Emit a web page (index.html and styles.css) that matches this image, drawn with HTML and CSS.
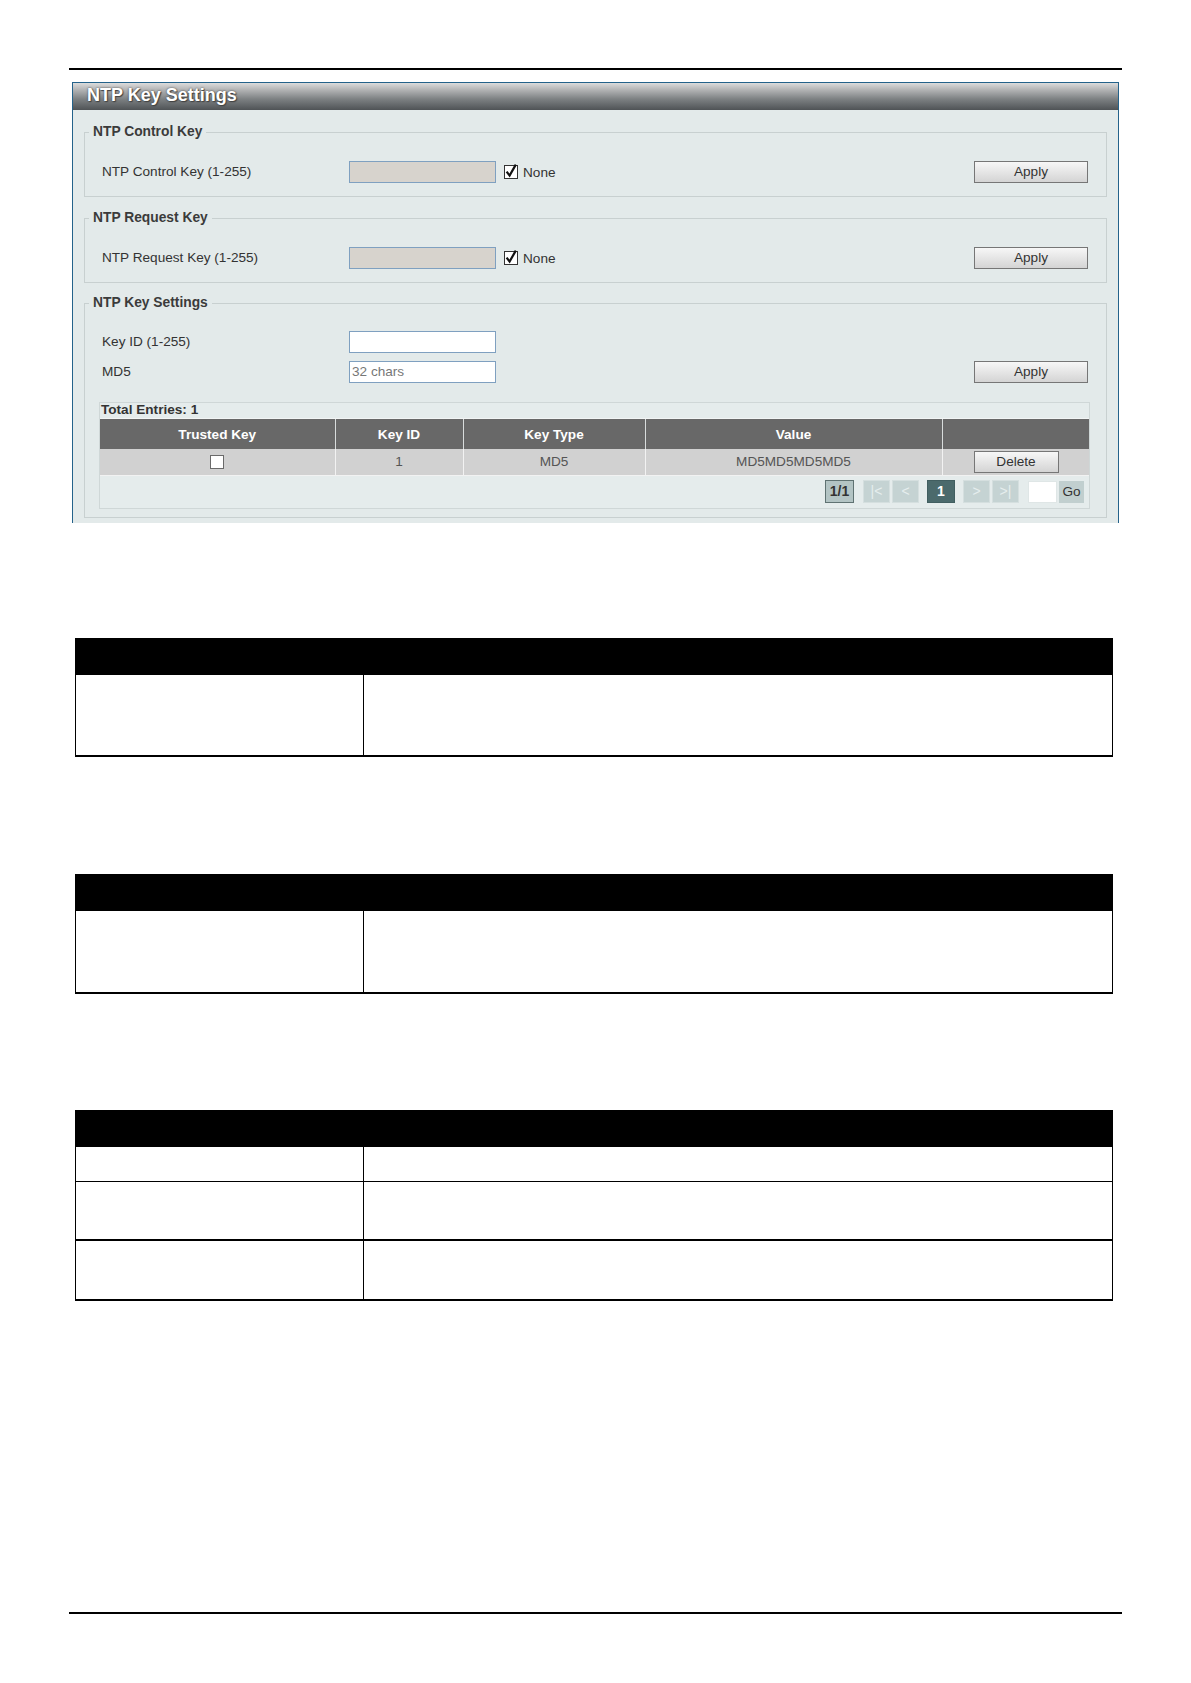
FILE: index.html
```html
<!DOCTYPE html>
<html lang="en">
<head>
<meta charset="utf-8">
<title>NTP Key Settings</title>
<link rel="stylesheet" href="styles.css">
</head>
<body>
<div class="page">
  <div class="rule"></div>

  <div class="panel">
    <div class="panel-title">NTP Key Settings</div>
    <div class="panel-body">

      <fieldset class="fs">
        <legend>NTP Control Key</legend>
        <div class="fs-body">
          <div class="row">
            <span class="lbl">NTP Control Key (1-255)</span>
            <span class="field disabled"></span>
            <span class="chk"><svg width="14" height="16" viewBox="0 0 14 16"><rect x="0.5" y="2.5" width="13" height="13" fill="#fff" stroke="#333"/><path d="M2.6 8.6 L5.6 12.6 L11.8 1.6" fill="none" stroke="#111" stroke-width="2.2"/></svg></span>
            <span class="chk-lbl">None</span>
            <span class="btn apply">Apply</span>
          </div>
        </div>
      </fieldset>

      <fieldset class="fs">
        <legend>NTP Request Key</legend>
        <div class="fs-body">
          <div class="row">
            <span class="lbl">NTP Request Key (1-255)</span>
            <span class="field disabled"></span>
            <span class="chk"><svg width="14" height="16" viewBox="0 0 14 16"><rect x="0.5" y="2.5" width="13" height="13" fill="#fff" stroke="#333"/><path d="M2.6 8.6 L5.6 12.6 L11.8 1.6" fill="none" stroke="#111" stroke-width="2.2"/></svg></span>
            <span class="chk-lbl">None</span>
            <span class="btn apply">Apply</span>
          </div>
        </div>
      </fieldset>

      <fieldset class="fs fs-last">
        <legend>NTP Key Settings</legend>
        <div class="fs-body last">
          <div class="row">
            <span class="lbl">Key ID (1-255)</span>
            <span class="field"></span>
          </div>
          <div class="row">
            <span class="lbl">MD5</span>
            <span class="field placeholder">32 chars</span>
            <span class="btn apply">Apply</span>
          </div>

          <div class="entries">
            <div class="entries-cap">Total Entries: 1</div>
            <table class="grid">
              <colgroup>
                <col class="c1"><col class="c2"><col class="c3"><col class="c4"><col class="c5">
              </colgroup>
              <thead>
                <tr><th>Trusted Key</th><th>Key ID</th><th>Key Type</th><th>Value</th><th></th></tr>
              </thead>
              <tbody>
                <tr>
                  <td><span class="box"></span></td>
                  <td>1</td>
                  <td>MD5</td>
                  <td>MD5MD5MD5MD5</td>
                  <td><span class="btn del">Delete</span></td>
                </tr>
              </tbody>
            </table>
            <div class="pager">
              <span class="pg info">1/1</span>
              <span class="pg dis first">|&lt;</span>
              <span class="pg dis">&lt;</span>
              <span class="pg cur">1</span>
              <span class="pg dis">&gt;</span>
              <span class="pg dis">&gt;|</span>
              <span class="pg-input"></span>
              <span class="pg go">Go</span>
            </div>
          </div>
        </div>
      </fieldset>

    </div>
  </div>

  <table class="desc t1">
    <colgroup><col class="ck"><col class="cv"></colgroup>
    <tr class="head"><th colspan="2"></th></tr>
    <tr class="r-tall"><td></td><td></td></tr>
  </table>

  <table class="desc t2">
    <colgroup><col class="ck"><col class="cv"></colgroup>
    <tr class="head"><th colspan="2"></th></tr>
    <tr class="r-tall"><td></td><td></td></tr>
  </table>

  <table class="desc t3">
    <colgroup><col class="ck"><col class="cv"></colgroup>
    <tr class="head"><th colspan="2"></th></tr>
    <tr class="r-short"><td></td><td></td></tr>
    <tr class="r-mid"><td></td><td></td></tr>
    <tr class="r-mid last"><td></td><td></td></tr>
  </table>

  <div class="rule footer"></div>
</div>
</body>
</html>
```

FILE: styles.css
```css
* { box-sizing: border-box; }

html, body {
  margin: 0;
  background: #fff;
}

body {
  font-family: "Liberation Sans", Arial, sans-serif;
  font-size: 13.6px;
  color: #333;
}

.page {
  margin-left: 69px;
  width: 1053px;
  padding-top: 68px;
}

.rule {
  height: 2px;
  background: #000;
}

/* ---------- Panel ---------- */
.panel {
  margin: 12px 0 0 3px;
  width: 1047px;
  border: 1px solid #24628a;
  border-bottom: 0;
  background: #e3eaea;
}

.panel-title {
  height: 27px;
  line-height: 25px;
  padding-left: 14px;
  color: #fff;
  font-weight: bold;
  font-size: 18px;
  background: linear-gradient(#dcdcdc 0%, #b3b4b5 25%, #7c8082 60%, #4f5356 100%);
  text-shadow: 0 0 2px #3a3a3a, 1px 1px 1px #444;
}

.panel-body {
  padding: 0 11px 5px;
}

.fs {
  margin: 14px 0 0;
  padding: 0 4px;
  border: 1px solid #c8d0d0;
  min-width: 0;
}

.fs + .fs {
  margin-top: 13px;
}

.fs + .fs.fs-last {
  margin-top: 12px;
}

.fs legend {
  padding: 0 4px;
  font-weight: bold;
  font-size: 13.8px;
  line-height: 16px;
  color: #3b3b3b;
}

.fs-body {
  padding: 21px 12px 13px 10px;
}

.fs-body.last {
  padding-top: 20px;
  padding-bottom: 8px;
}

.row {
  display: flex;
  align-items: center;
  height: 22px;
}

.row + .row {
  margin-top: 8px;
}

.lbl {
  width: 250px;
  padding-left: 3px;
  padding-bottom: 1px;
  color: #333;
}

.field {
  width: 147px;
  height: 22px;
  border: 1px solid #7fa0c0;
  background: #fff;
  line-height: 20px;
  padding-left: 2px;
}

.field.disabled {
  background: #d7d3cd;
}

.field.placeholder {
  color: #777;
}

.chk {
  display: inline-flex;
  margin-left: 8px;
  margin-top: -3px;
}

.chk-lbl {
  margin-left: 5px;
  color: #333;
}

.btn {
  display: inline-block;
  height: 22px;
  line-height: 20px;
  text-align: center;
  border: 1px solid #767676;
  background: linear-gradient(#f7f7f7, #e2e2e2 60%, #d4d4d4);
  color: #333;
  font-size: 13.6px;
}

.btn.apply {
  width: 114px;
  margin-left: auto;
  margin-right: 2px;
}

.btn.del {
  width: 85px;
}

/* ---------- Entries table ---------- */
.entries {
  margin-top: 19px;
  border: 1px solid #cfd7d7;
  background: #e5ecec;
}

.entries-cap {
  height: 16px;
  line-height: 14px;
  padding-left: 1px;
  font-weight: bold;
  color: #333;
  border-bottom: 1px solid #f2f5f5;
}

.grid {
  width: 100%;
  border-collapse: collapse;
  table-layout: fixed;
}

.grid .c1 { width: 235px; }
.grid .c2 { width: 128px; }
.grid .c3 { width: 182px; }
.grid .c4 { width: 297px; }
.grid .c5 { width: auto; }

.grid th {
  height: 30px;
  background: #686868;
  color: #fff;
  font-weight: bold;
  font-size: 13.6px;
  border-left: 1px solid #d8dcdc;
  padding: 0;
}

.grid th:first-child,
.grid td:first-child {
  border-left: 0;
}

.grid td {
  height: 26px;
  background: #d1d1d1;
  color: #555;
  text-align: center;
  border-left: 1px solid #f2f2f2;
  border-bottom: 1px solid #f2f2f2;
  padding: 0;
}

.grid td:last-child {
  text-align: left;
  padding-left: 31px;
}

.box {
  display: inline-block;
  width: 14px;
  height: 14px;
  background: #fff;
  border: 1px solid #6a6a6a;
  vertical-align: middle;
}

.pager {
  display: flex;
  justify-content: flex-end;
  align-items: center;
  height: 32px;
  padding-right: 5px;
}

.pg {
  height: 23px;
  line-height: 21px;
  text-align: center;
  font-size: 14px;
}

.pg.info {
  width: 29px;
  background: #b3c4c4;
  border: 1px solid #5f7272;
  color: #333;
  font-weight: bold;
  margin-right: 9px;
}

.pg.dis {
  width: 27px;
  background: #c5d3d3;
  border: 1px solid #d5dfdf;
  color: #e6eeee;
  margin-right: 2px;
}

.pg.dis + .pg.cur {
  margin-left: 6px;
}

.pg.cur {
  width: 28px;
  background: #4b6a6c;
  border: 1px solid #415e60;
  color: #fff;
  font-weight: bold;
  margin-right: 8px;
}

.pg-input {
  width: 29px;
  height: 22px;
  background: #fff;
  border: 1px solid #dfe6e6;
  margin-left: 7px;
  margin-right: 2px;
}

.pg.go {
  width: 25px;
  height: 22px;
  line-height: 22px;
  background: #c1cfcf;
  color: #333;
  font-size: 13.6px;
}

/* ---------- Description tables ---------- */
.desc {
  margin-left: 6px;
  width: 1038px;
  border-collapse: collapse;
  table-layout: fixed;
}

.desc .ck { width: 288px; }
.desc .cv { width: auto; }

.desc.t1 { margin-top: 115px; }
.desc.t2 { margin-top: 117px; }
.desc.t3 { margin-top: 116px; }

.desc th {
  height: 36px;
  background: #000;
  padding: 0;
  border: 1px solid #000;
}

.desc td {
  padding: 0;
  border-left: 1px solid #000;
  border-right: 1px solid #000;
  border-bottom: 1px solid #000;
}

.desc .r-tall td { height: 82px; border-bottom-width: 2px; }
.desc .r-short td { height: 35px; }
.desc .r-mid td { height: 59px; border-bottom-width: 2px; }
.desc .r-mid.last td { height: 60px; }

.rule.footer {
  margin-top: 311px;
}
```
